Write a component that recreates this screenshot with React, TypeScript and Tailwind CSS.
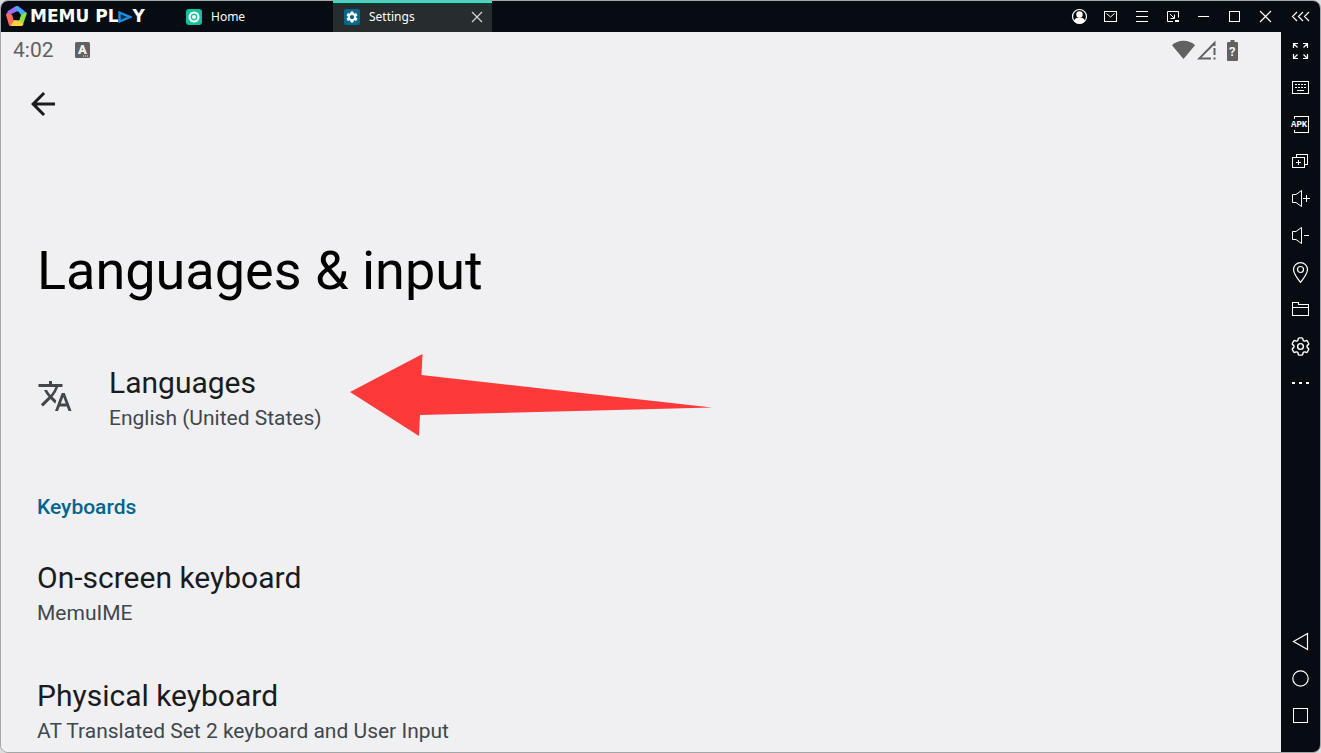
import type { ReactNode } from 'react';
import { HiOutlineCog6Tooth } from 'react-icons/hi2';
import { MdArrowBack, MdSettings, MdTranslate } from 'react-icons/md';

function Glyph({ children, smooth = false }: { children: ReactNode; smooth?: boolean }) {
  return (
    <svg
      className="block size-[21px] shrink-0"
      viewBox="0 0 21 21"
      fill="none"
      stroke="currentColor"
      shapeRendering={smooth ? 'auto' : 'crispEdges'}
      aria-hidden="true"
    >
      {children}
    </svg>
  );
}

const windowButtons = [
  {
    label: 'Account',
    icon: (
      <Glyph smooth>
        <circle cx="10.5" cy="10.5" r="7" strokeWidth="1.2" />
        <circle cx="10.5" cy="8.5" r="3.2" fill="currentColor" stroke="none" />
        <path d="M5 15c.6-2.4 2.7-3.5 5.5-3.5s4.9 1.1 5.5 3.5c-1.4 1.7-3.4 2.7-5.5 2.7S6.4 16.7 5 15z" fill="currentColor" stroke="none" />
      </Glyph>
    ),
  },
  {
    label: 'Messages',
    icon: (
      <Glyph smooth>
        <rect x="4.5" y="5.5" width="12" height="10" />
        <path d="M6.5 7.5l4 3.5 4-3.5" />
      </Glyph>
    ),
  },
  { label: 'Menu', icon: <Glyph><path d="M5 5.5h12M5 10.5h12M5 15.5h12" /></Glyph> },
  {
    label: 'Mini window',
    icon: (
      <Glyph smooth>
        <path d="M11 15.5H5.5v-10h11v6M8 8l4 4M12.5 8.5v4h-4" />
        <path d="M13 15h4" strokeWidth="2" />
      </Glyph>
    ),
  },
  { label: 'Minimize', icon: <Glyph><path d="M5 10.5h11" /></Glyph> },
  { label: 'Maximize', icon: <Glyph><rect x="5.5" y="5.5" width="10" height="10" /></Glyph> },
  { label: 'Close', icon: <Glyph smooth><path d="M5 5l11 11M16 5L5 16" strokeWidth="1.2" /></Glyph> },
];

const toolButtons = [
  {
    label: 'Full screen',
    icon: (
      <Glyph smooth>
        <path d="M3.5 8V3.5H8M3.5 3.5l4 4M13 3.5h4.5V8M17.5 3.5l-4 4M3.5 14v4.5H8M3.5 18.5l4-4M13 18.5h4.5V14M17.5 18.5l-4-4" strokeWidth="1.2" />
      </Glyph>
    ),
  },
  {
    label: 'Keyboard mapping',
    icon: (
      <Glyph>
        <rect x="2.5" y="4.5" width="16" height="12" />
        <path d="M5 7.5h12M5 10.5h12" strokeDasharray="2 1" />
        <path d="M7 13.5h7" />
      </Glyph>
    ),
  },
  {
    label: 'Install APK',
    icon: (
      <Glyph>
        <path d="M4.5 5V2.5h14v16h-14V16" />
        <text x="1" y="13" fill="currentColor" stroke="none" className="font-['Liberation_Mono',monospace] text-[9px] font-bold">APK</text>
      </Glyph>
    ),
  },
  {
    label: 'Multi-instance',
    icon: (
      <Glyph>
        <path d="M6.5 6V3.5h11v10H15" />
        <rect x="2.5" y="6.5" width="12" height="10" />
        <path d="M6 11.5h5M8.5 9v5" />
      </Glyph>
    ),
  },
  {
    label: 'Volume up',
    icon: (
      <Glyph smooth>
        <path d="M2.5 6.5H6l5.5-4v16L6 14.5H2.5zM13 10.5h7M16.5 7v7" />
      </Glyph>
    ),
  },
  {
    label: 'Volume down',
    icon: (
      <Glyph smooth>
        <path d="M2.5 6.5H6l5.5-4v16L6 14.5H2.5zM14 10.5h5" />
      </Glyph>
    ),
  },
  {
    label: 'Location',
    icon: (
      <Glyph smooth>
        <path d="M10.5 20.3C6.5 15.5 3.5 11.5 3.5 7.6a7 7 0 0 1 14 0c0 3.9-3 7.9-7 12.7z" strokeWidth="1.2" />
        <circle cx="10.5" cy="7.5" r="3" strokeWidth="1.2" />
      </Glyph>
    ),
  },
  {
    label: 'Shared folder',
    icon: (
      <Glyph>
        <path d="M2.5 3.5h6v2h10v11h-16zM2.5 8.5h16" />
      </Glyph>
    ),
  },
  { label: 'Emulator settings', icon: <HiOutlineCog6Tooth className="size-[23px]" /> },
  { label: 'More', icon: <Glyph><path d="M2 10h3M9 10h3M16 10h3" strokeWidth="2" /></Glyph> },
];

const navButtons = [
  { label: 'Back', icon: <Glyph smooth><path d="M17.5 2.5v16L3.5 10.5z" strokeWidth="1.2" /></Glyph> },
  { label: 'Home', icon: <Glyph smooth><circle cx="10.5" cy="10.5" r="7.7" strokeWidth="1.2" /></Glyph> },
  { label: 'Recent apps', icon: <Glyph><rect x="3.5" y="3.5" width="14" height="14" /></Glyph> },
];

function Logo() {
  return (
    <div className="flex w-[173px] items-center pl-[5px] text-white">
      <svg className="mr-[3px] size-[21px] shrink-0" viewBox="0 0 21 21" aria-hidden="true">
        <path d="M10 0L2 5q-1 1-.7 2L2.5 9l7.5-3 3-2z" fill="#9b6cf7" />
        <path d="M10 0q1-.5 2 0l7 5.5q1 1 .8 2L15 10l-2-4-2.5-1z" fill="#45a8fb" />
        <path d="M20.8 7.5L17 18.5l-4-4 1.5-5L20 6z" fill="#86e53f" />
        <path d="M17.5 18q-.5 2-2 2H4l2-6 8 .5z" fill="#fbd440" />
        <path d="M4.5 20q-1 0-1.5-1L0 9q0-2 1.5-2L7 9l1 5.5z" fill="#fb6a5e" />
        <path d="M10.5 5.5l4.5 3.3-1.7 5.2H7.7L6 8.8z" fill="#070b12" />
      </svg>
      <span className="flex items-center font-['DejaVu_Sans',sans-serif] text-[17px] leading-[21px] font-bold">
        MEMU&nbsp;PL
        <svg className="h-[12px] w-[14px]" viewBox="0 0 14 12" role="img" aria-label="A">
          <path d="M1.5 1.5L12 6 1.5 10.5z" fill="#0d2f4d" stroke="#1b8fe0" strokeWidth="2.4" />
        </svg>
        Y
      </span>
    </div>
  );
}

function TitleBar() {
  return (
    <header className="flex h-[31px] shrink-0 bg-[#070b12] text-white">
      <Logo />
      <nav className="flex flex-1 font-['Noto_Sans',sans-serif] text-xs" aria-label="Open apps">
        <button type="button" className="flex w-[159px] items-center gap-[9px] px-3">
          <svg className="size-4" viewBox="0 0 16 16" aria-hidden="true">
            <rect width="16" height="16" rx="3" fill="#12c29a" />
            <circle cx="8" cy="8" r="5.5" fill="#fff" />
            <circle cx="8" cy="8" r="2.7" fill="none" stroke="#12c29a" strokeWidth="1.4" />
          </svg>
          Home
        </button>
        <div className="flex w-[159px] items-center border-t-2 border-[#00f5d0] bg-[#272c2e] pr-[9px] pb-0.5 pl-[11px]">
          <button type="button" className="flex flex-1 items-center gap-[9px]">
            <span className="flex size-4 items-center justify-center rounded-[2px] bg-[#04688f]">
              <MdSettings className="size-3.5" />
            </span>
            Settings
          </button>
          <button type="button" aria-label="Close Settings" className="text-gray-300">
            <svg className="block size-3" viewBox="0 0 12 12" stroke="currentColor" aria-hidden="true">
              <path d="M1 1l10 10M11 1L1 11" strokeWidth="1.2" />
            </svg>
          </button>
        </div>
      </nav>
      {windowButtons.map(({ label, icon }) => (
        <button key={label} type="button" aria-label={label} className="flex w-[31px] items-center justify-center">
          {icon}
        </button>
      ))}
      <button type="button" aria-label="Collapse toolbar" className="flex w-[39px] items-center justify-center">
        <Glyph smooth>
          <path d="M7 6l-4.5 4.5L7 15M13 6l-4.5 4.5L13 15M19 6l-4.5 4.5L19 15" strokeWidth="1.2" />
        </Glyph>
      </button>
    </header>
  );
}

function StatusBar() {
  return (
    <div className="flex h-9 items-center pr-[43px] pl-3 text-[#616161]">
      <time className="text-[21px] leading-[26px]">4:02</time>
      <svg className="ml-[21px] h-4 w-[15px]" viewBox="0 0 15 16" aria-hidden="true">
        <rect width="15" height="16" rx="1.5" fill="currentColor" />
        <text x="3" y="12" fill="#f0eff2" className="text-[13px] font-black">A</text>
        <path d="M8 14h6" stroke="#f0eff2" strokeDasharray="1 1" />
      </svg>
      <div className="ml-auto flex items-center">
        <svg className="h-5 w-[23px]" viewBox="0 0 23 20" fill="currentColor" aria-hidden="true">
          <path d="M11.5 19L0 5.2C3 2.3 7 .7 11.5 .7S20 2.3 23 5.2z" />
        </svg>
        <svg className="ml-0.5 h-5 w-[19px]" viewBox="0 0 19 20" fill="currentColor" aria-hidden="true">
          <path d="M0 19.5L18.5 .5V6h-2V5.5L4.5 17.5H14v2zM16.5 8h2v7h-2zM16.5 17.5h2v2h-2z" />
        </svg>
        <svg className="ml-[11px] h-[21px] w-[11px]" viewBox="0 0 11 21" aria-hidden="true">
          <path d="M3.5 0h4v2H10q1 0 1 1v17q0 1-1 1H1q-1 0-1-1V3q0-1 1-1h2.5z" fill="currentColor" />
          <text x="2" y="16" fill="#f0eff2" className="text-[13px] font-bold">?</text>
        </svg>
      </div>
    </div>
  );
}

function Preference({ title, summary }: { title: string; summary: string }) {
  return (
    <button type="button" className="flex flex-col gap-1 text-left">
      <span className="text-[30px] leading-9 text-[#191c1e]">{title}</span>
      <span className="text-[21px] leading-[26px] text-[#40484d]">{summary}</span>
    </button>
  );
}

function SettingsScreen() {
  return (
    <main className="flex-1 bg-[#f0eff2] font-['Roboto',sans-serif]">
      <StatusBar />
      <div className="px-9">
        <button type="button" aria-label="Navigate up" className="-ml-3 mt-[18px] block text-[#191c1e]">
          <MdArrowBack className="size-9" />
        </button>
        <h1 className="mt-[117px] text-[54px] leading-[64px] text-black">Languages &amp; input</h1>

        <div className="relative mt-[62px] flex items-start gap-9">
          <MdTranslate className="mt-[13px] size-9 text-[#40484d]" />
          <Preference title="Languages" summary="English (United States)" />
          {/* Callout arrow drawn over the screen */}
          <svg className="pointer-events-none absolute -top-[11px] left-[313px] h-[82px] w-[363px]" viewBox="0 0 363 82" aria-hidden="true">
            <path d="M0 38L72.5 0l-1 21L362 53.5 70 61l-1 21z" fill="#fd3939" />
          </svg>
        </div>

        <h2 className="mt-[63px] text-[21px] leading-[26px] font-medium text-[#00658e]">Keyboards</h2>
        <div className="mt-10 flex flex-col items-start gap-[52px] pb-[7px]">
          <Preference title="On-screen keyboard" summary="MemuIME" />
          <Preference title="Physical keyboard" summary="AT Translated Set 2 keyboard and User Input" />
        </div>
      </div>
    </main>
  );
}

function Toolbar() {
  return (
    <aside className="flex w-[39px] shrink-0 flex-col bg-[#070b12] pb-[18px] text-white">
      {toolButtons.map(({ label, icon }) => (
        <button key={label} type="button" aria-label={label} className="flex h-[37px] items-center justify-center">
          {icon}
        </button>
      ))}
      <div className="mt-auto flex flex-col">
        {navButtons.map(({ label, icon }) => (
          <button key={label} type="button" aria-label={label} className="flex h-[37px] items-center justify-center">
            {icon}
          </button>
        ))}
      </div>
    </aside>
  );
}

export default function App() {
  return (
    <div className="flex min-h-screen bg-[#dcdddd]">
      <div className="flex flex-1 flex-col overflow-hidden rounded-lg border border-[#a3a6a6]">
        <TitleBar />
        <div className="flex flex-1">
          <SettingsScreen />
          <Toolbar />
        </div>
      </div>
    </div>
  );
}
